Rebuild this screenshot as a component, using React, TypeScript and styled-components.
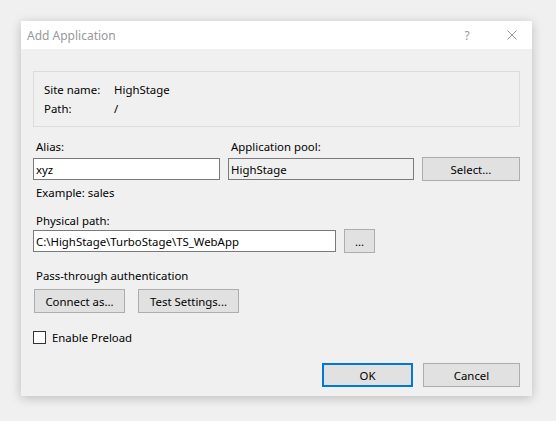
import styled, { createGlobalStyle } from "styled-components"

const GlobalStyle = createGlobalStyle`
  html, body {
    margin: 0;
    padding: 0;
    background: #f0f0f0;
  }
  body {
    font-family: "Segoe UI", "Noto Sans", "Liberation Sans", sans-serif;
    font-size: 11.4px;
    color: #000;
  }
`

const Page = styled.div`
  width: 556px;
  height: 421px;
  padding: 21px 0 0 21px;
  box-sizing: border-box;
`

const Dialog = styled.div`
  width: 511px;
  height: 375px;
  background: #f0f0f0;
  box-shadow: 0 2px 10px rgba(0, 0, 0, 0.22);
  display: flex;
  flex-direction: column;
`

const TitleBar = styled.div`
  height: 28px;
  background: #fff;
  display: flex;
  align-items: center;
  padding-left: 6px;
  color: #999;
  font-size: 12px;
`

const Title = styled.div`
  flex: 1;
`

const TitleButton = styled.div<{ $w: number }>`
  width: ${(p) => p.$w}px;
  height: 28px;
  display: flex;
  align-items: center;
  justify-content: center;
  color: #999;
`

const Body = styled.div`
  flex: 1;
  padding: 22px 12px 9px 12px;
  display: flex;
  flex-direction: column;
`

const InfoBox = styled.div`
  border: 1px solid #dcdcdc;
  height: 56px;
  box-sizing: border-box;
  padding: 8px 10px 0 10px;
  display: grid;
  grid-template-columns: 70px 1fr;
  grid-auto-rows: 19px;
  line-height: 19px;
`

const Label = styled.div<{ $top?: number }>`
  line-height: 16px;
  padding-left: 3px;
  margin-top: ${(p) => p.$top ?? 0}px;
`

const TopGrid = styled.div`
  display: grid;
  grid-template-columns: 187px 186px 98px;
  grid-template-rows: 16px 24px;
  row-gap: 2px;
  column-gap: 8px;
  margin-top: 12px;
  align-items: center;
`

const Field = styled.div<{ $readOnly?: boolean }>`
  height: 22px;
  box-sizing: border-box;
  border: 1px solid #7a7a7a;
  background: ${(p) => (p.$readOnly ? "#f0f0f0" : "#fff")};
  display: flex;
  align-items: center;
  padding-left: 2px;
  white-space: nowrap;
  overflow: hidden;
`

const Button = styled.button<{ $w: number; $default?: boolean }>`
  width: ${(p) => p.$w}px;
  height: 24px;
  box-sizing: border-box;
  background: #e1e1e1;
  border: ${(p) => (p.$default ? "2px solid #0078d7" : "1px solid #adadad")};
  font: inherit;
  color: #000;
  padding: 0;
  margin: 0;
`

const PathRow = styled.div`
  display: flex;
  align-items: center;
  height: 24px;
  gap: 8px;
`

const ButtonRow = styled.div<{ $top: number; $end?: boolean }>`
  display: flex;
  gap: ${(p) => (p.$end ? 10 : 13)}px;
  margin-top: ${(p) => p.$top}px;
  justify-content: ${(p) => (p.$end ? "flex-end" : "flex-start")};
  padding-left: ${(p) => (p.$end ? 0 : 1)}px;
`

const CheckRow = styled.label`
  display: flex;
  align-items: center;
  gap: 6px;
  margin-top: 18px;
  height: 13px;
  line-height: 13px;
`

const CheckBox = styled.span`
  width: 13px;
  height: 13px;
  box-sizing: border-box;
  border: 1px solid #333;
  background: #fff;
`

const Spacer = styled.div`
  flex: 1;
`

export default function App() {
  return (
    <>
      <GlobalStyle />
      <Page>
        <Dialog>
          <TitleBar>
            <Title>Add Application</Title>
            <TitleButton $w={50}>?</TitleButton>
            <TitleButton $w={40}>
              <svg width="10" height="10" viewBox="0 0 10 10">
                <path d="M0.5 0.5 L9.5 9.5 M9.5 0.5 L0.5 9.5" stroke="#999" strokeWidth="1" fill="none" />
              </svg>
            </TitleButton>
          </TitleBar>
          <Body>
            <InfoBox>
              <span>Site name:</span>
              <span>HighStage</span>
              <span>Path:</span>
              <span>/</span>
            </InfoBox>
            <TopGrid>
              <Label>Alias:</Label>
              <Label>Application pool:</Label>
              <span />
              <Field>xyz</Field>
              <Field $readOnly>HighStage</Field>
              <Button $w={98}>Select...</Button>
            </TopGrid>
            <Label $top={4}>Example: sales</Label>
            <Label $top={12}>Physical path:</Label>
            <PathRow>
              <Field style={{ width: 303 }}>C:\HighStage\TurboStage\TS_WebApp</Field>
              <Button $w={31}>...</Button>
            </PathRow>
            <Label $top={15}>Pass-through authentication</Label>
            <ButtonRow $top={5}>
              <Button $w={91}>Connect as...</Button>
              <Button $w={101}>Test Settings...</Button>
            </ButtonRow>
            <CheckRow>
              <CheckBox />
              Enable Preload
            </CheckRow>
            <Spacer />
            <ButtonRow $top={0} $end>
              <Button $w={91} $default>OK</Button>
              <Button $w={97}>Cancel</Button>
            </ButtonRow>
          </Body>
        </Dialog>
      </Page>
    </>
  )
}
